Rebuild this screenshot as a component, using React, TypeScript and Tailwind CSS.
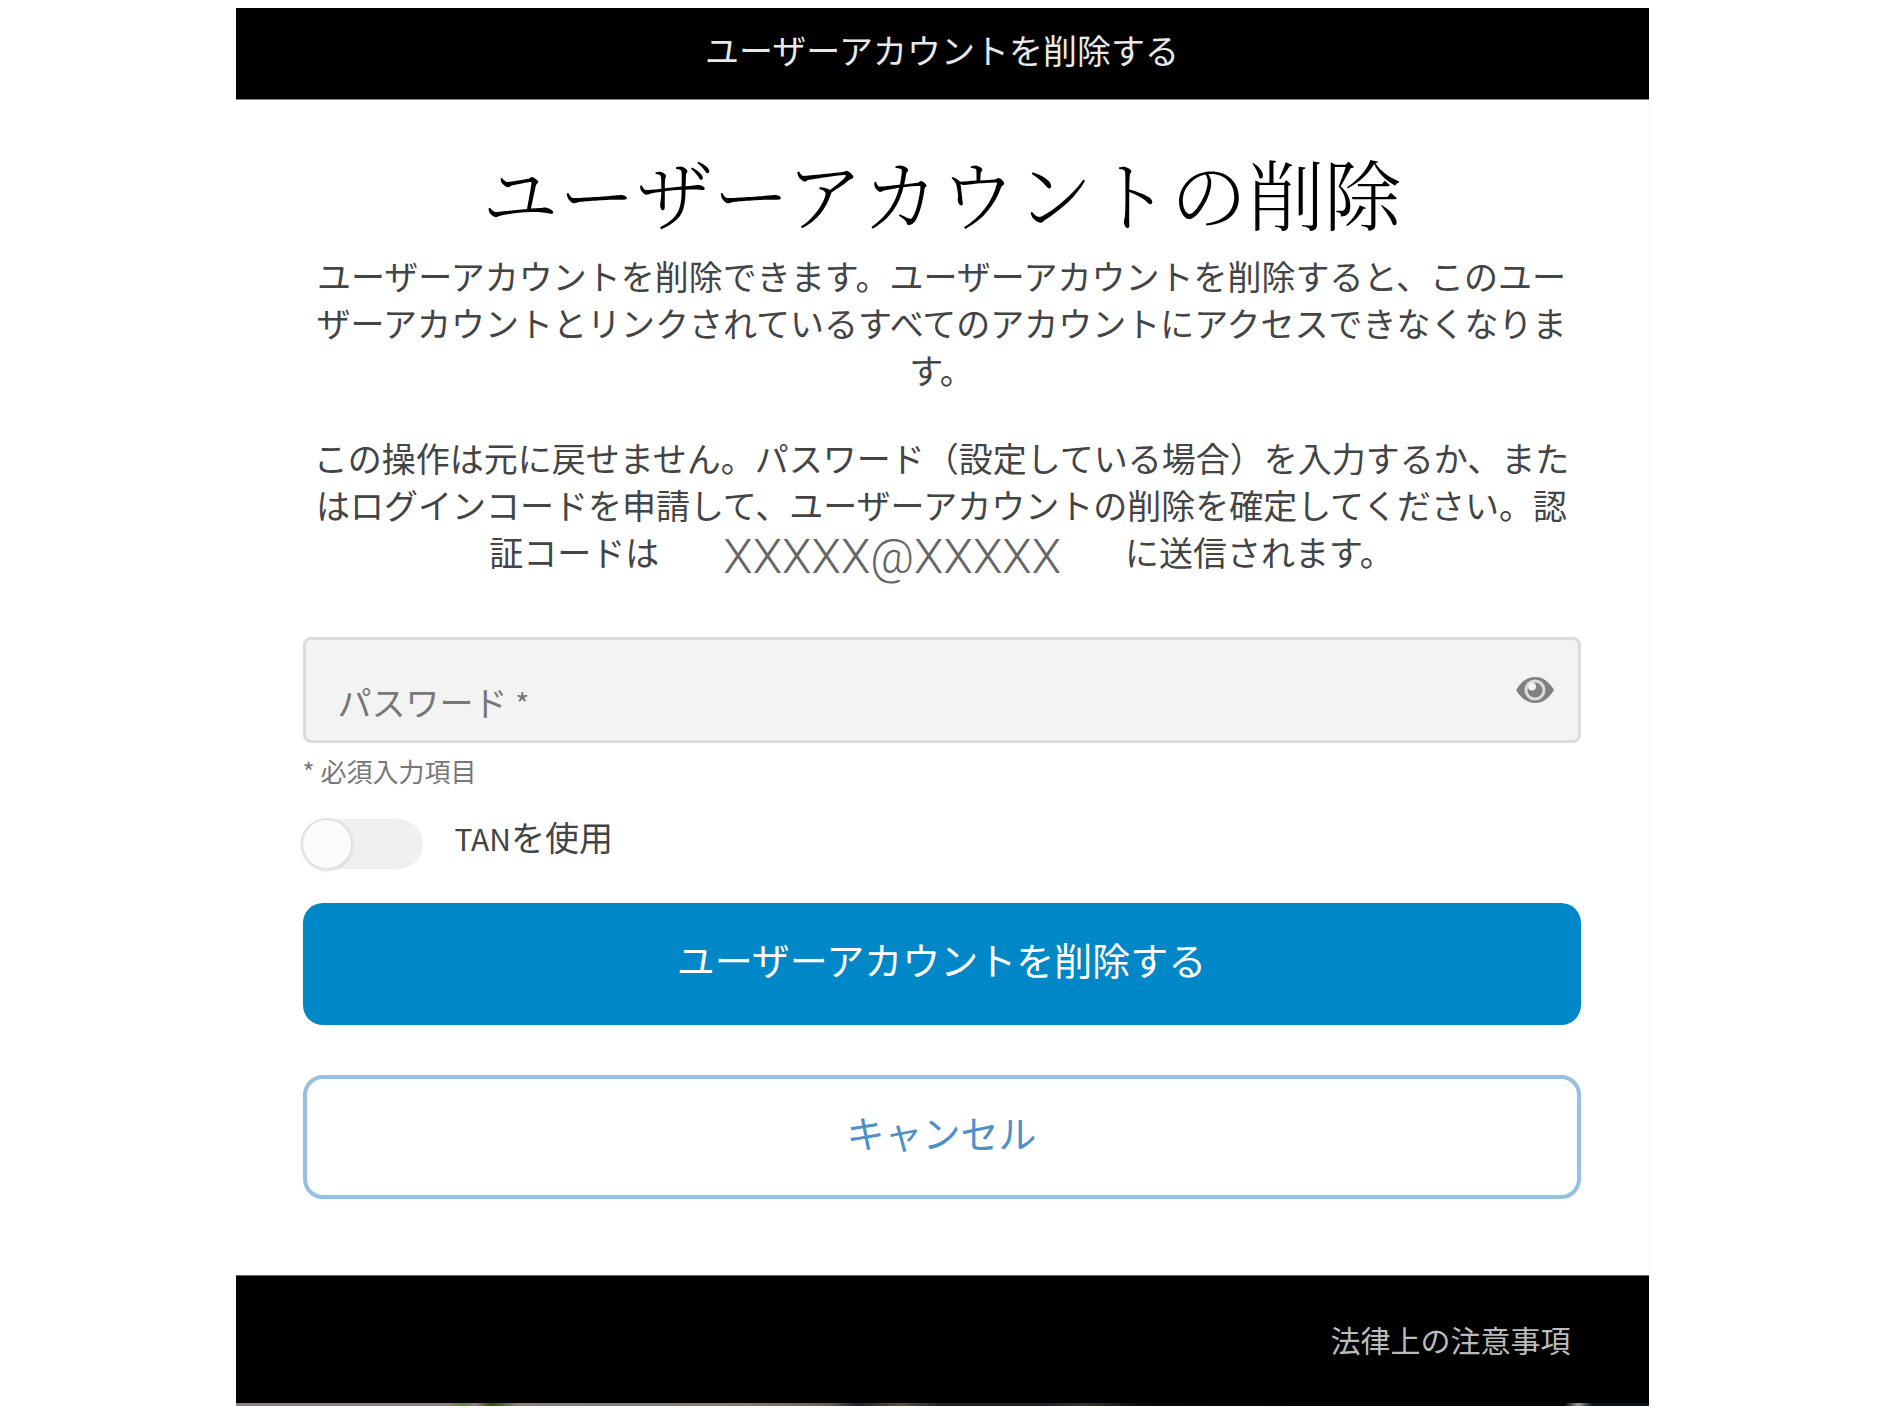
import { useState } from "react";

interface SwitchProps {
  id: string;
  checked: boolean;
  onChange: (checked: boolean) => void;
}

function EyeIcon() {
  return (
    <svg viewBox="0 0 38 26" className="h-[26px] w-[38px]" aria-hidden="true">
      <path d="M0 13C5 4.500 11.500 0 19 0s14 4.500 19 13c-5 8.500-11.500 13-19 13S5 21.500 0 13z" fill="#808080" />
      <circle cx="19" cy="13" r="10.500" fill="#dcdcdc" />
      <circle cx="19" cy="13" r="7.500" fill="#808080" />
      <circle cx="16" cy="9.500" r="4" fill="#f4f4f4" />
    </svg>
  );
}

function Switch({ id, checked, onChange }: SwitchProps) {
  return (
    <span className="relative -ml-0.5 flex h-[50px] w-[122px] shrink-0 items-center rounded-full bg-[#f0f0f0] has-checked:justify-end has-checked:bg-[#0087c8]">
      <input
        id={id}
        type="checkbox"
        checked={checked}
        onChange={(e) => onChange(e.target.checked)}
        className="absolute inset-0 cursor-pointer opacity-0"
      />
      <span className="size-[52px] shrink-0 rounded-full border-2 border-[#e2e2e2] bg-[#fbfbfb] shadow-sm" />
    </span>
  );
}

export default function App() {
  const [password, setPassword] = useState("");
  const [visible, setVisible] = useState(false);
  const [useTan, setUseTan] = useState(false);

  return (
    <div className="bg-white py-2 font-['Noto_Sans_CJK_JP',sans-serif] text-[#444]">
      <div className="mx-auto w-3/4">
        <header className="border-b border-[#888] bg-black pt-[18px] pb-[26px] text-center text-[34px] leading-[47px] text-[#e8e8e8]">
          ユーザーアカウントを削除する
        </header>

        <main className="border-r border-[#f8f8f8] px-[67px] pt-[50px] pb-[76px]">
          <h1 className="text-center font-['Noto_Serif_CJK_JP','Noto_Sans_CJK_JP',serif] text-[77px] leading-[84px] font-light text-black">
            ユーザーアカウントの削除
          </h1>

          <div className="mt-[18px] space-y-[41px] text-center text-[34px] leading-[47px]">
            <p>
              ユーザーアカウントを削除できます。ユーザーアカウントを削除すると、このユーザーアカウントとリンクされているすべてのアカウントにアクセスできなくなります。
            </p>
            <p>
              この操作は元に戻せません。パスワード（設定している場合）を入力するか、またはログインコードを申請して、ユーザーアカウントの削除を確定してください。認証コードは
              <span className="mx-[64px] inline-block h-9 align-middle font-['Roboto',sans-serif] text-[48px] leading-9 font-light text-[#666]">
                XXXXX@XXXXX
              </span>
              に送信されます。
            </p>
          </div>

          <form className="mt-[62px]" onSubmit={(e) => e.preventDefault()}>
            <div className="flex h-[106px] items-center gap-3 rounded-lg border-3 border-[#dcdcdc] bg-[#f3f3f3] pr-6 pl-8">
              <label htmlFor="password" className="pt-6 text-[34px] leading-[47px] text-[#777]">
                パスワード <span className="text-[30px]">*</span>
              </label>
              <input
                id="password"
                type={visible ? "text" : "password"}
                required
                value={password}
                onChange={(e) => setPassword(e.target.value)}
                className="min-w-0 flex-1 bg-transparent pt-6 text-[34px] leading-[47px] outline-none"
              />
              <button type="button" aria-label="パスワードを表示" onClick={() => setVisible(!visible)}>
                <EyeIcon />
              </button>
            </div>
            <p className="mt-3 text-[26px] leading-8 text-[#777]">* 必須入力項目</p>

            <div className="mt-8 flex items-start gap-8">
              <Switch id="use-tan" checked={useTan} onChange={setUseTan} />
              <label htmlFor="use-tan" className="text-[34px] leading-9">
                <span className="text-[30px]">TAN</span>を使用
              </label>
            </div>

            <button
              type="submit"
              className="mt-[34px] block h-[122px] w-full rounded-[20px] bg-[#0087c8] pb-3 text-[38px] leading-[47px] text-white"
            >
              ユーザーアカウントを削除する
            </button>
            <button
              type="button"
              className="mt-[50px] block h-[124px] w-full rounded-[20px] border-4 border-[#95c0e2] pb-3 text-[38px] leading-[47px] text-[#4d90c8]"
            >
              キャンセル
            </button>
          </form>
        </main>

        <footer className="border-t border-[#666] bg-black text-right text-[30px] leading-[47px] text-[#bbb]">
          <div className="px-[78px] py-10">
            <a href="#legal">法律上の注意事項</a>
          </div>
          <div className="h-[3px] bg-[linear-gradient(90deg,#8a8080_0%,#8a8080_15%,#5f8a2e_16%,#8a8080_17%,#2f5206_18%,#8a8080_20%,#857b78_36%,#66605a_42%,#22202a_44%,#5a5248_47%,#22202a_50%,#22202a_57%,#3a362c_60%,#0a0a0a_64%,#000_75%,#000_94%,#999_95%,#0a1218_96%,#0a1218_100%)]" />
        </footer>
      </div>
    </div>
  );
}
